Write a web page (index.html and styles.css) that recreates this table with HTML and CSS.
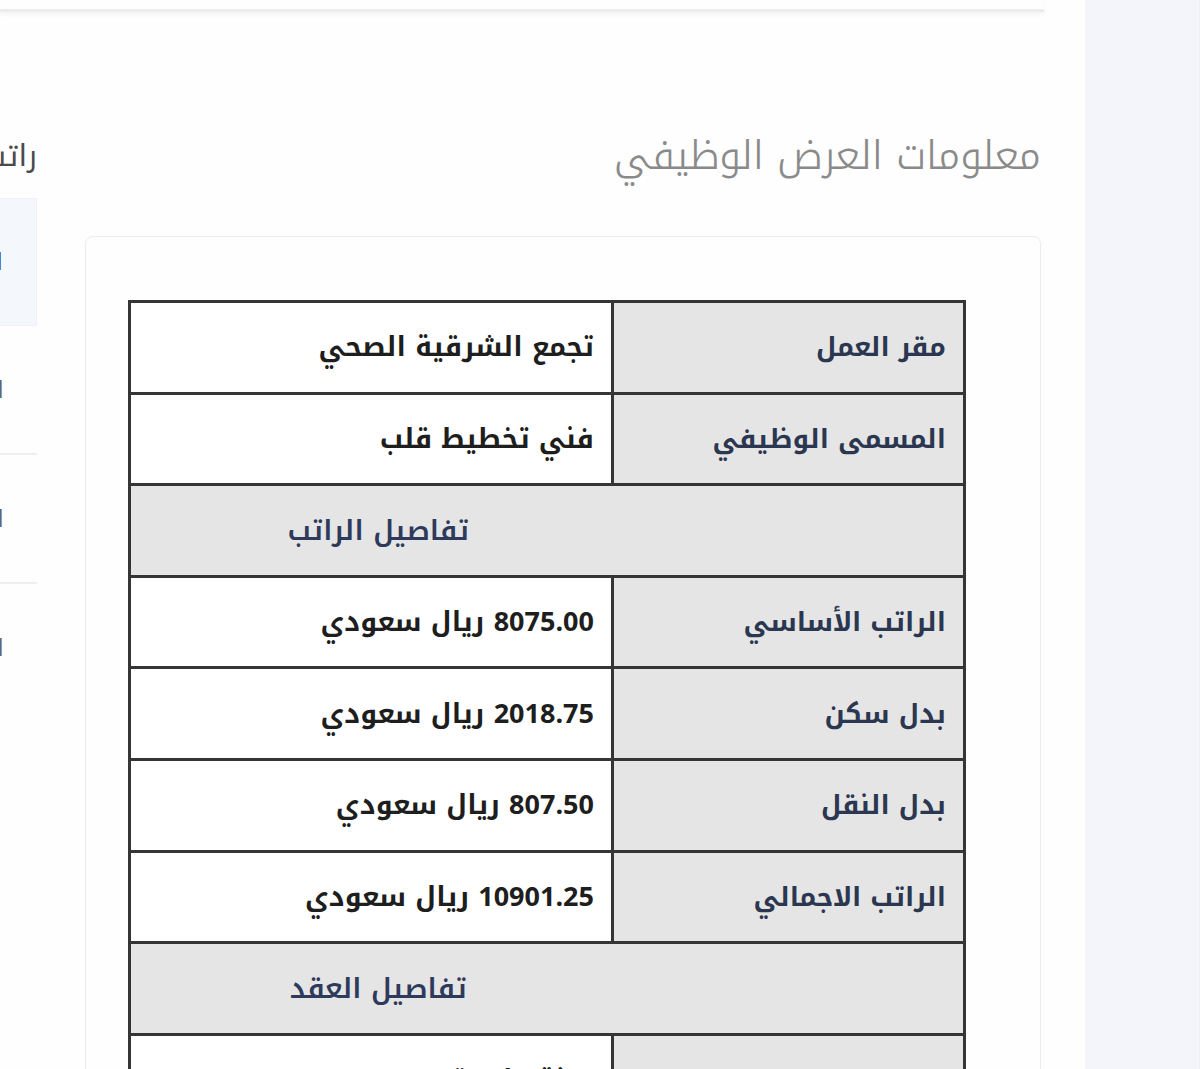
FILE: index.html
```html
<!DOCTYPE html>
<html lang="ar" dir="rtl">
<head>
<meta charset="utf-8">
<title>معلومات العرض الوظيفي</title>
<link rel="stylesheet" href="styles.css">
</head>
<body>
<div class="layout">
  <aside class="sidebar"></aside>
  <main class="content">
    <div class="topcard"></div>
    <div class="sections">
      <section class="offer">
        <h2 class="offer-title">معلومات العرض الوظيفي</h2>
        <div class="card">
          <table class="info">
            <colgroup>
              <col class="col-label">
              <col class="col-value">
            </colgroup>
            <tr>
              <td class="label">مقر العمل</td>
              <td class="value">تجمع الشرقية الصحي</td>
            </tr>
            <tr>
              <td class="label">المسمى الوظيفي</td>
              <td class="value">فني تخطيط قلب</td>
            </tr>
            <tr class="sec">
              <td class="sec-blank"></td>
              <td class="sec-title">تفاصيل الراتب</td>
            </tr>
            <tr>
              <td class="label">الراتب الأساسي</td>
              <td class="value">8075.00 ريال سعودي</td>
            </tr>
            <tr>
              <td class="label">بدل سكن</td>
              <td class="value">2018.75 ريال سعودي</td>
            </tr>
            <tr>
              <td class="label">بدل النقل</td>
              <td class="value">807.50 ريال سعودي</td>
            </tr>
            <tr>
              <td class="label">الراتب الاجمالي</td>
              <td class="value">10901.25 ريال سعودي</td>
            </tr>
            <tr class="sec">
              <td class="sec-blank"></td>
              <td class="sec-title">تفاصيل العقد</td>
            </tr>
            <tr>
              <td class="label">مدة العقد</td>
              <td class="value">سنة واحدة</td>
            </tr>
          </table>
        </div>
      </section>
      <section class="side">
        <div class="side-inner">
          <h2 class="side-title">راتب الوظيفة</h2>
          <div class="side-box"><span class="side-strong">الراتب</span></div>
          <div class="side-row"><span>البدلات</span></div>
          <div class="side-row"><span>الخصم</span></div>
          <div class="side-row last"><span>الصافي</span></div>
        </div>
      </section>
    </div>
  </main>
</div>
</body>
</html>
```

FILE: styles.css
```css
html, body {
  margin: 0;
  padding: 0;
  background: #ffffff;
}

body {
  font-family: "Noto Kufi Arabic", "Noto Sans Arabic", "DejaVu Sans", sans-serif;
  width: 1200px;
  height: 1069px;
  overflow: hidden;
}

.layout {
  display: flex;
  height: 1069px;
}

.sidebar {
  width: 114px;
  flex: none;
  background: #f3f5fa;
  border-right: 1px solid #eef0f5;
}

.content {
  flex: 1;
  min-width: 0;
  background: #fefefe;
}

.topcard {
  height: 9px;
  margin-right: 41px;
  border-bottom: 3px solid #ececec;
  box-shadow: 0 3px 4px rgba(0, 0, 0, 0.04);
}

.sections {
  display: flex;
  gap: 48px;
  padding-right: 44px;
}

.offer {
  width: 956px;
  flex: none;
}

.offer-title {
  margin: 118px 0 0;
  height: 74px;
  line-height: 52px;
  font-size: 40px;
  font-weight: 300;
  color: #8a8a8a;
  text-align: right;
}

.card {
  margin-top: 32px;
  border: 1px solid #ececec;
  border-radius: 8px;
  padding: 63px 74px 0 44px;
  height: 900px;
  box-shadow: 0 0 3px rgba(0, 0, 0, 0.03);
}

.info {
  width: 838px;
  table-layout: fixed;
  border-collapse: collapse;
  font-size: 26.5px;
}

.col-label {
  width: 352px;
}

.info td {
  border: 3px solid #353535;
  height: 88.5px;
  box-sizing: border-box;
  padding: 0 17px;
  vertical-align: middle;
  white-space: nowrap;
}

.info tr {
  height: 91.6px;
}

.info .label {
  background: #e5e5e5;
  color: #2b3750;
  font-weight: 700;
  text-align: right;
}

.info .value {
  background: #ffffff;
  color: #1e1e1e;
  font-weight: 700;
  font-size: 27px;
  text-align: right;
}

.info .sec td {
  background: #e5e5e5;
}

.info .sec-blank {
  border-left-style: hidden;
}

.info .sec-title {
  color: #2e3a5c;
  font-weight: 600;
  font-size: 28px;
  text-align: center;
  padding-left: 30px;
}

.side {
  width: 38px;
  flex: none;
  overflow: hidden;
  position: relative;
}

.side-inner {
  width: 400px;
}

.side-title {
  margin: 118px 0 0;
  height: 68px;
  line-height: 52px;
  font-size: 30px;
  font-weight: 400;
  color: #4a4a4a;
  text-align: right;
  white-space: nowrap;
}

.side-box {
  height: 128px;
  background: #f4f7fc;
  border: 1px solid #eef1f6;
  box-sizing: border-box;
  display: flex;
  align-items: center;
  padding-right: 33px;
  font-size: 24px;
  color: #222;
}

.side-strong {
  font-weight: 700;
  white-space: nowrap;
}

.side-row {
  height: 127px;
  border-bottom: 2px solid #efefef;
  display: flex;
  align-items: center;
  padding-right: 33px;
  font-size: 24px;
  color: #666;
  white-space: nowrap;
}

.side-row.last {
  border-bottom: none;
}
```
